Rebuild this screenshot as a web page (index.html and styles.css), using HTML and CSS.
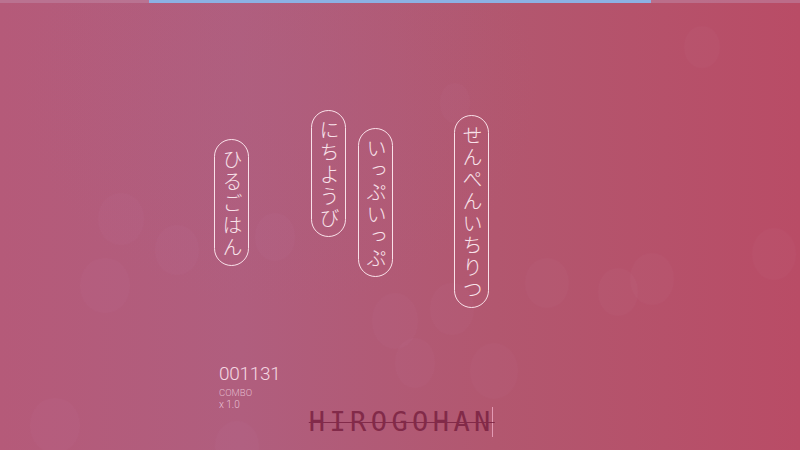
FILE: index.html
```html
<!DOCTYPE html>
<html lang="ja">
<head>
<meta charset="utf-8">
<title>HIROGOHAN</title>
<link rel="stylesheet" href="styles.css">
</head>
<body>
<div class="screen">
  <div class="topline"><div class="progress"></div></div>
  <div class="field">
    <div class="bokeh b1"></div><div class="bokeh b2"></div><div class="bokeh b3"></div>
    <div class="bokeh b4"></div><div class="bokeh b5"></div><div class="bokeh b6"></div>
    <div class="bokeh b7"></div><div class="bokeh b8"></div><div class="bokeh b9"></div>
    <div class="bokeh b10"></div><div class="bokeh b11"></div><div class="bokeh b12"></div>
    <div class="bokeh b13"></div><div class="bokeh b14"></div><div class="bokeh b15"></div>
    <div class="bokeh b16"></div>

    <div class="word w1">ひるごはん</div>
    <div class="word w2">にちようび</div>
    <div class="word w3">いっぷいっぷ</div>
    <div class="word w4">せんぺんいちりつ</div>

    <div class="hud">
      <div class="score">001131</div>
      <div class="combo">COMBO</div>
      <div class="mult">x 1.0</div>
    </div>
  </div>
  <div class="inputbar">
    <span class="typed">HIROGOHAN</span><span class="caret"></span>
  </div>
</div>
</body>
</html>
```
FILE: styles.css
```css
html, body {
  margin: 0;
  padding: 0;
  width: 800px;
  height: 450px;
  overflow: hidden;
}
.screen {
  width: 800px;
  height: 450px;
  display: flex;
  flex-direction: column;
  background:
    radial-gradient(ellipse 260px 220px at 280px 90px, rgba(172, 98, 132, 0.22), rgba(172, 98, 132, 0) 100%),
    linear-gradient(to right, #b55a79 0%, #b05e7e 30%, #b2576f 62%, #b94c66 100%);
  font-family: "Noto Sans CJK JP", "Noto Sans", sans-serif;
  position: relative;
}
.topline {
  height: 3px;
  background: rgba(190, 130, 160, 0.6);
  display: flex;
  justify-content: center;
  flex: none;
}
.progress {
  width: 502px;
  height: 3px;
  background: #8cb1e4;
}
.field {
  position: relative;
  flex: 1;
}
.bokeh {
  position: absolute;
  border-radius: 50%;
  background: rgba(255, 230, 240, 0.025);
  box-shadow: 0 0 2px rgba(255, 230, 240, 0.03);
}
.b1 { left: 98px; top: 190px; width: 46px; height: 52px; }
.b2 { left: 80px; top: 255px; width: 50px; height: 55px; }
.b3 { left: 155px; top: 222px; width: 44px; height: 50px; }
.b4 { left: 255px; top: 210px; width: 40px; height: 48px; }
.b5 { left: 440px; top: 80px; width: 30px; height: 40px; }
.b6 { left: 372px; top: 290px; width: 46px; height: 56px; }
.b7 { left: 395px; top: 335px; width: 40px; height: 50px; }
.b8 { left: 430px; top: 280px; width: 44px; height: 52px; }
.b9 { left: 470px; top: 340px; width: 48px; height: 56px; }
.b10 { left: 525px; top: 255px; width: 44px; height: 50px; }
.b11 { left: 598px; top: 265px; width: 40px; height: 48px; }
.b12 { left: 630px; top: 250px; width: 44px; height: 52px; }
.b13 { left: 684px; top: 23px; width: 36px; height: 42px; }
.b14 { left: 752px; top: 225px; width: 44px; height: 52px; }
.b15 { left: 30px; top: 395px; width: 50px; height: 55px; }
.b16 { left: 215px; top: 418px; width: 44px; height: 50px; }

.word {
  position: absolute;
  writing-mode: vertical-rl;
  box-sizing: border-box;
  width: 35px;
  line-height: 32px;
  border: 1.5px solid rgba(255, 236, 242, 0.92);
  border-radius: 18px;
  padding: 9px 0 6px;
  font-size: 20px;
  font-weight: 300;
  letter-spacing: 2px;
  color: #f8e2ea;
  text-align: center;
}
.w1 { left: 214px; top: 136px; }
.w2 { left: 311px; top: 107px; }
.w3 { left: 358px; top: 125px; }
.w4 { left: 454px; top: 112px; }

.hud {
  position: absolute;
  left: 219px;
  top: 360px;
  font-family: Roboto, "Noto Sans", sans-serif;
  color: #f4d7e2;
  display: flex;
  flex-direction: column;
}
.score {
  font-size: 19px;
  font-weight: 300;
  line-height: 22px;
  letter-spacing: -0.3px;
}
.combo {
  font-size: 9.5px;
  font-weight: 300;
  line-height: 12px;
  color: rgba(244, 215, 226, 0.75);
  margin-top: 2px;
}
.mult {
  font-size: 10px;
  font-weight: 300;
  line-height: 12px;
  color: rgba(244, 215, 226, 0.85);
}

.inputbar {
  flex: none;
  height: 46px;
  display: flex;
  justify-content: center;
  align-items: flex-start;
  padding-left: 2px;
}
.typed {
  font-family: "DejaVu Sans Mono", monospace;
  font-size: 27px;
  line-height: 30px;
  letter-spacing: 4.4px;
  color: #7a2242;
  text-decoration: line-through;
  text-decoration-thickness: 1px;
  text-decoration-color: #7a2242;
  margin-top: 3px;
  opacity: 0.85;
}
.caret {
  width: 1.5px;
  height: 30px;
  background: #e39ab4;
  margin-top: 3px;
  margin-left: -3px;
}
```
